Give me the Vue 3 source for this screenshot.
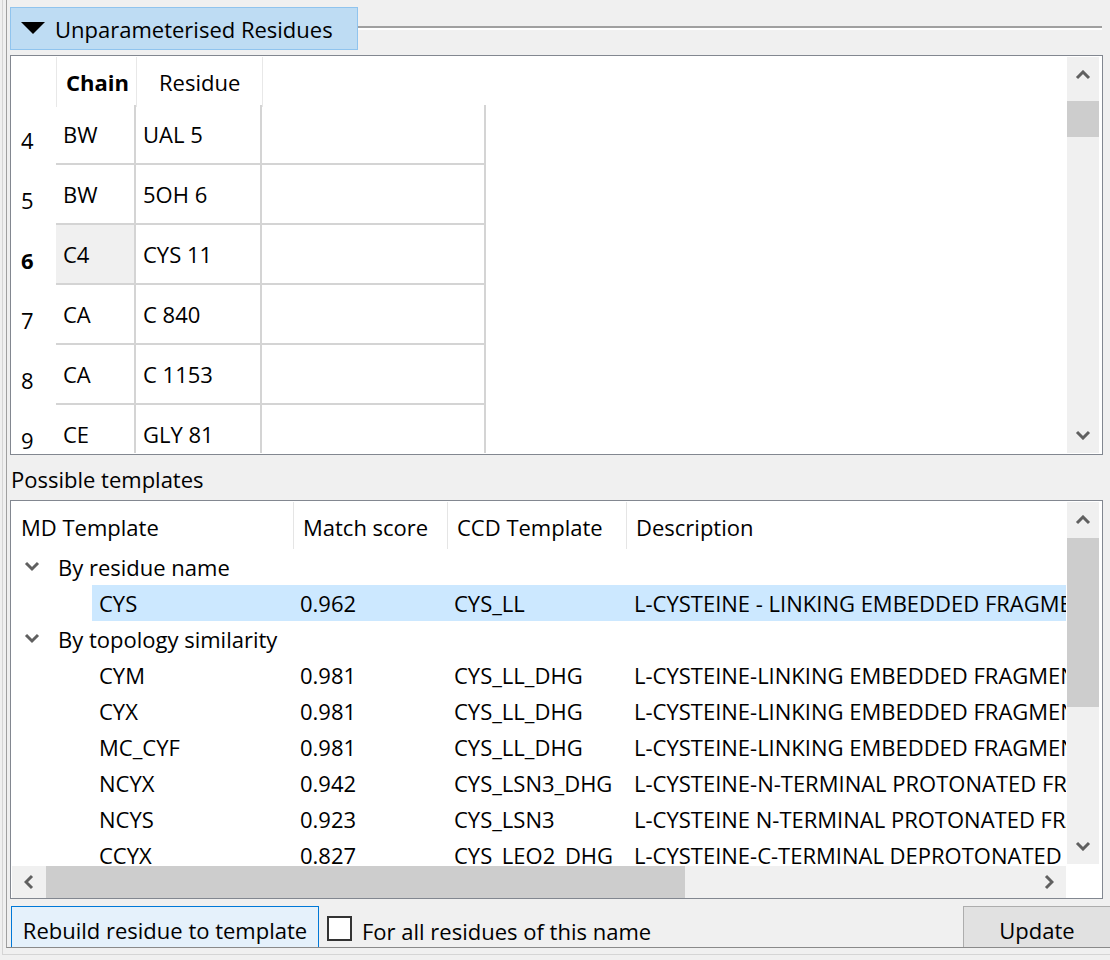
<script setup>
const residues = [
  { num: 4, chain: "BW", name: "UAL 5" },
  { num: 5, chain: "BW", name: "5OH 6" },
  { num: 6, chain: "C4", name: "CYS 11", current: true },
  { num: 7, chain: "CA", name: "C 840" },
  { num: 8, chain: "CA", name: "C 1153" },
  { num: 9, chain: "CE", name: "GLY 81" },
];

const templates = [
  { group: "By residue name" },
  { md: "CYS", score: "0.962", ccd: "CYS_LL", desc: "L-CYSTEINE - LINKING EMBEDDED FRAGMENT", selected: true },
  { group: "By topology similarity" },
  { md: "CYM", score: "0.981", ccd: "CYS_LL_DHG", desc: "L-CYSTEINE-LINKING EMBEDDED FRAGMENT" },
  { md: "CYX", score: "0.981", ccd: "CYS_LL_DHG", desc: "L-CYSTEINE-LINKING EMBEDDED FRAGMENT" },
  { md: "MC_CYF", score: "0.981", ccd: "CYS_LL_DHG", desc: "L-CYSTEINE-LINKING EMBEDDED FRAGMENT" },
  { md: "NCYX", score: "0.942", ccd: "CYS_LSN3_DHG", desc: "L-CYSTEINE-N-TERMINAL PROTONATED FRAGMENT" },
  { md: "NCYS", score: "0.923", ccd: "CYS_LSN3", desc: "L-CYSTEINE N-TERMINAL PROTONATED FRAGMENT" },
  { md: "CCYX", score: "0.827", ccd: "CYS_LEO2_DHG", desc: "L-CYSTEINE-C-TERMINAL DEPROTONATED FRAGMENT" },
];
</script>

<template>
  <div class="outer">
    <div class="inner">
      <div class="section-head">
        <div class="toggle">
          <span class="triangle"></span>
          <span>Unparameterised Residues</span>
        </div>
        <div class="head-rule"></div>
      </div>

      <!-- residue table -->
      <div class="frame residue-frame">
        <div class="residue-table">
          <div class="res-row res-head">
            <div class="num"></div>
            <div class="h-cell chain-h"><b>Chain</b></div>
            <div class="h-cell residue-h">Residue</div>
            <div class="h-cell"></div>
          </div>
          <div v-for="r in residues" :key="r.num" class="res-row res-body">
            <div class="num" :class="{ bold: r.current }">{{ r.num }}</div>
            <div class="cell" :class="{ current: r.current }">{{ r.chain }}</div>
            <div class="cell">{{ r.name }}</div>
            <div class="cell"></div>
          </div>
        </div>
        <div class="vbar">
          <div class="arrow">
            <svg width="16" height="10" viewBox="0 0 16 10"><path d="M2 8 L8 2 L14 8" /></svg>
          </div>
          <div class="track">
            <div class="thumb res-thumb"></div>
          </div>
          <div class="arrow">
            <svg width="16" height="10" viewBox="0 0 16 10"><path d="M2 2 L8 8 L14 2" /></svg>
          </div>
        </div>
      </div>

      <div class="label">Possible templates</div>

      <!-- template tree -->
      <div class="frame tree-frame">
        <div class="tree-top">
          <div class="tree">
            <div class="tree-head">
              <div class="col-md th first">MD Template</div>
              <div class="col-score th">Match score</div>
              <div class="col-ccd th">CCD Template</div>
              <div class="col-desc th">Description</div>
            </div>
            <template v-for="(t, i) in templates" :key="i">
              <div v-if="t.group" class="tree-row group">
                <svg class="chev" width="18" height="12" viewBox="0 0 18 12"><path d="M3 2 L9 8 L15 2" /></svg>
                <span>{{ t.group }}</span>
              </div>
              <div v-else class="tree-row item">
                <div class="sel" :class="{ on: t.selected }">
                  <div class="v-md">{{ t.md }}</div>
                  <div class="v-score">{{ t.score }}</div>
                  <div class="v-ccd">{{ t.ccd }}</div>
                  <div class="v-desc">{{ t.desc }}</div>
                </div>
              </div>
            </template>
          </div>
          <div class="vbar">
            <div class="arrow">
              <svg width="16" height="10" viewBox="0 0 16 10"><path d="M2 8 L8 2 L14 8" /></svg>
            </div>
            <div class="track">
              <div class="thumb tree-thumb"></div>
            </div>
            <div class="arrow">
              <svg width="16" height="10" viewBox="0 0 16 10"><path d="M2 2 L8 8 L14 2" /></svg>
            </div>
          </div>
        </div>
        <div class="hbar">
          <div class="h-arrow">
            <svg width="10" height="16" viewBox="0 0 10 16"><path d="M8 2 L2 8 L8 14" /></svg>
          </div>
          <div class="h-track">
            <div class="h-thumb"></div>
          </div>
          <div class="h-arrow">
            <svg width="10" height="16" viewBox="0 0 10 16"><path d="M2 2 L8 8 L2 14" /></svg>
          </div>
        </div>
      </div>

      <div class="actions">
        <button class="rebuild">Rebuild residue to template</button>
        <span class="check"></span>
        <span class="check-label">For all residues of this name</span>
        <button class="update">Update</button>
      </div>
    </div>
  </div>
</template>

<style>
html,
body {
  margin: 0;
  background: #f0f0f0;
}
</style>

<style scoped>
.outer {
  box-sizing: border-box;
  width: 1110px;
  height: 955px;
  margin-left: 2px;
  border-left: 1px solid #d5d5d5;
  border-bottom: 1px solid #d5d5d5;
  padding-left: 3px;
  padding-bottom: 6px;
  background: #f0f0f0;
  font-family: "Open Sans", "Noto Sans", sans-serif;
  font-size: 22px;
  color: #000;
  overflow: hidden;
}
.inner {
  box-sizing: border-box;
  height: 948px;
  border-left: 1px solid #a0a0a0;
  border-bottom: 1px solid #8a8a8a;
  padding: 7px 0 0 3px;
  overflow: hidden;
}
.section-head {
  display: flex;
  height: 43px;
}
.toggle {
  box-sizing: border-box;
  width: 348px;
  height: 43px;
  padding-left: 10px;
  display: flex;
  align-items: center;
  gap: 10px;
  background: #bedcf3;
  border: 1px solid #90c4ee;
  flex: none;
}
.triangle {
  width: 0;
  height: 0;
  border-left: 12px solid transparent;
  border-right: 12px solid transparent;
  border-top: 12px solid #000;
  margin-top: -2px;
}
.head-rule {
  width: 744px;
  height: 2px;
  margin-top: 19px;
  background: #a0a0a0;
  border-bottom: 2px solid #fff;
}
.frame {
  box-sizing: border-box;
  width: 1093px;
  background: #fff;
  border: 1px solid #828790;
  padding: 1px;
}
.residue-frame {
  height: 400px;
  margin-top: 5px;
  display: flex;
  justify-content: space-between;
}
.residue-table {
  overflow: hidden;
}
.res-row {
  display: grid;
  grid-template-columns: 44px 80px 126px 224px;
}
.res-head {
  height: 48px;
}
.res-body {
  height: 60px;
}
.num {
  padding-top: 20px;
  padding-left: 9px;
  line-height: 30px;
  box-sizing: border-box;
}
.bold {
  font-weight: 700;
}
.h-cell {
  border-left: 1px solid #e8e8e8;
  line-height: 50px;
}
.chain-h {
  padding-left: 9px;
}
.residue-h {
  padding-left: 22px;
}
.cell {
  box-sizing: border-box;
  padding-left: 7px;
  padding-top: 14px;
  line-height: 30px;
  border-right: 2px solid #d4d4d4;
  border-bottom: 2px solid #d4d4d4;
}
.cell:nth-child(2) {
  border-left: 0;
}
.current {
  background: #f0f0f0;
}
.vbar {
  width: 32px;
  margin-right: 2px;
  background: #f0f0f0;
  display: flex;
  flex-direction: column;
  flex: none;
}
.arrow {
  height: 36px;
  flex: none;
  display: flex;
  align-items: center;
  justify-content: center;
}
.vbar svg,
.hbar svg,
.chev {
  fill: none;
  stroke: #606060;
  stroke-width: 3;
}
.track {
  flex: 1;
}
.thumb {
  background: #cdcdcd;
}
.res-thumb {
  height: 36px;
  margin-top: 8px;
}
.tree-thumb {
  height: 169px;
}
.label {
  height: 45px;
  line-height: 49px;
  padding-left: 1px;
}
.tree-frame {
  height: 399px;
  display: flex;
  flex-direction: column;
}
.tree-top {
  height: 362px;
  display: flex;
  justify-content: space-between;
}
.tree {
  width: 1054px;
  height: 362px;
  overflow: hidden;
}
.tree-head {
  display: flex;
  height: 47px;
}
.th {
  box-sizing: border-box;
  line-height: 50px;
  padding-left: 9px;
  border-left: 1px solid #e5e5e5;
}
.first {
  border-left: 0;
}
.col-md {
  width: 281px;
}
.col-score {
  width: 154px;
}
.col-ccd {
  width: 179px;
}
.col-desc {
  width: 440px;
}
.tree-row {
  height: 36px;
  line-height: 36px;
}
.group {
  display: flex;
  align-items: center;
}
.chev {
  margin-left: 11px;
  margin-right: 17px;
  flex: none;
}
.item {
  padding-left: 80px;
}
.sel {
  display: flex;
  height: 36px;
  overflow: hidden;
  white-space: nowrap;
}
.sel.on {
  background: #cce8ff;
}
.v-md {
  width: 208px;
  padding-left: 7px;
  box-sizing: border-box;
  flex: none;
}
.v-score {
  width: 154px;
  flex: none;
}
.v-ccd {
  width: 180px;
  flex: none;
}
.v-desc {
  flex: none;
}
.hbar {
  height: 32px;
  margin-top: 2px;
  display: flex;
  background: #f0f0f0;
  width: 1054px;
}
.h-arrow {
  width: 34px;
  flex: none;
  display: flex;
  align-items: center;
  justify-content: center;
}
.h-track {
  flex: 1;
}
.h-thumb {
  width: 639px;
  height: 32px;
  background: #cdcdcd;
}
.actions {
  display: flex;
  align-items: flex-start;
  margin-top: 7px;
  height: 41px;
}
button {
  font: inherit;
  color: #000;
  padding: 0;
  box-sizing: border-box;
  height: 48px;
}
.rebuild {
  width: 308px;
  margin-left: 1px;
  background: #e5f1fb;
  border: 1px solid #0078d7;
}
.check {
  box-sizing: border-box;
  width: 25px;
  height: 25px;
  margin-left: 8px;
  margin-top: 10px;
  background: #fff;
  border: 2px solid #333;
}
.check-label {
  margin-left: 10px;
  line-height: 50px;
}
.update {
  width: 148px;
  margin-left: auto;
  margin-right: 1px;
  background: #e1e1e1;
  border: 1px solid #adadad;
}
</style>
